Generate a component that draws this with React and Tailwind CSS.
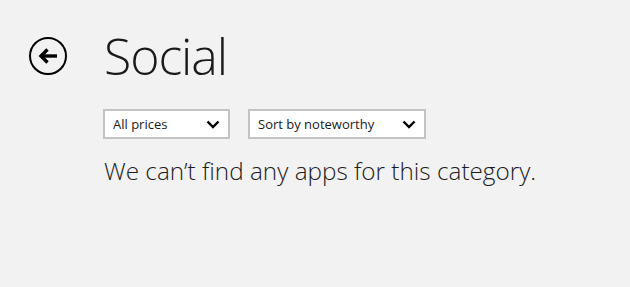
import { useState } from "react";

function BackButton() {
  return (
    <button className="w-[38px] h-[38px] rounded-full border-2 border-black flex items-center justify-center">
      <svg width="22" height="18" viewBox="0 0 22 18" fill="none" stroke="black" strokeWidth="3.4" strokeLinecap="butt" strokeLinejoin="miter">
        <path d="M20 9H4" />
        <path d="M10.5 2.5L4 9l6.5 6.5" />
      </svg>
    </button>
  );
}

function Select({ label, width }) {
  return (
    <div className={`${width} h-[30px] border-2 border-[#c3c3c3] bg-white flex items-center justify-between pl-[8px] pr-[8px]`}>
      <span className="text-[13px] text-[#1a1a1a] leading-none">{label}</span>
      <svg width="14" height="9" viewBox="0 0 14 9" fill="none" stroke="black" strokeWidth="2.4">
        <path d="M1.5 1.5L7 7l5.5-5.5" />
      </svg>
    </div>
  );
}

export default function App() {
  const [prices] = useState("All prices");
  const [sort] = useState("Sort by noteworthy");

  return (
    <div className="w-[630px] h-[287px] bg-[#f2f2f2] font-['Open_Sans',sans-serif] text-[#1a1a1a] overflow-hidden">
      <div className="flex items-start pt-[37px] pl-[29px]">
        <BackButton />
        <div className="ml-[37px] flex flex-col">
          <h1 className="text-[50px] font-light leading-[38px] tracking-[-1.1px]">Social</h1>
          <div className="flex gap-[18px] mt-[34px] ml-[-1px]">
            <Select label={prices} width="w-[127px]" />
            <Select label={sort} width="w-[178px]" />
          </div>
          <p className="mt-[17px] text-[24.3px] font-light leading-[30px] text-[#1c1c1c]">
            We can’t find any apps for this category.
          </p>
        </div>
      </div>
    </div>
  );
}
